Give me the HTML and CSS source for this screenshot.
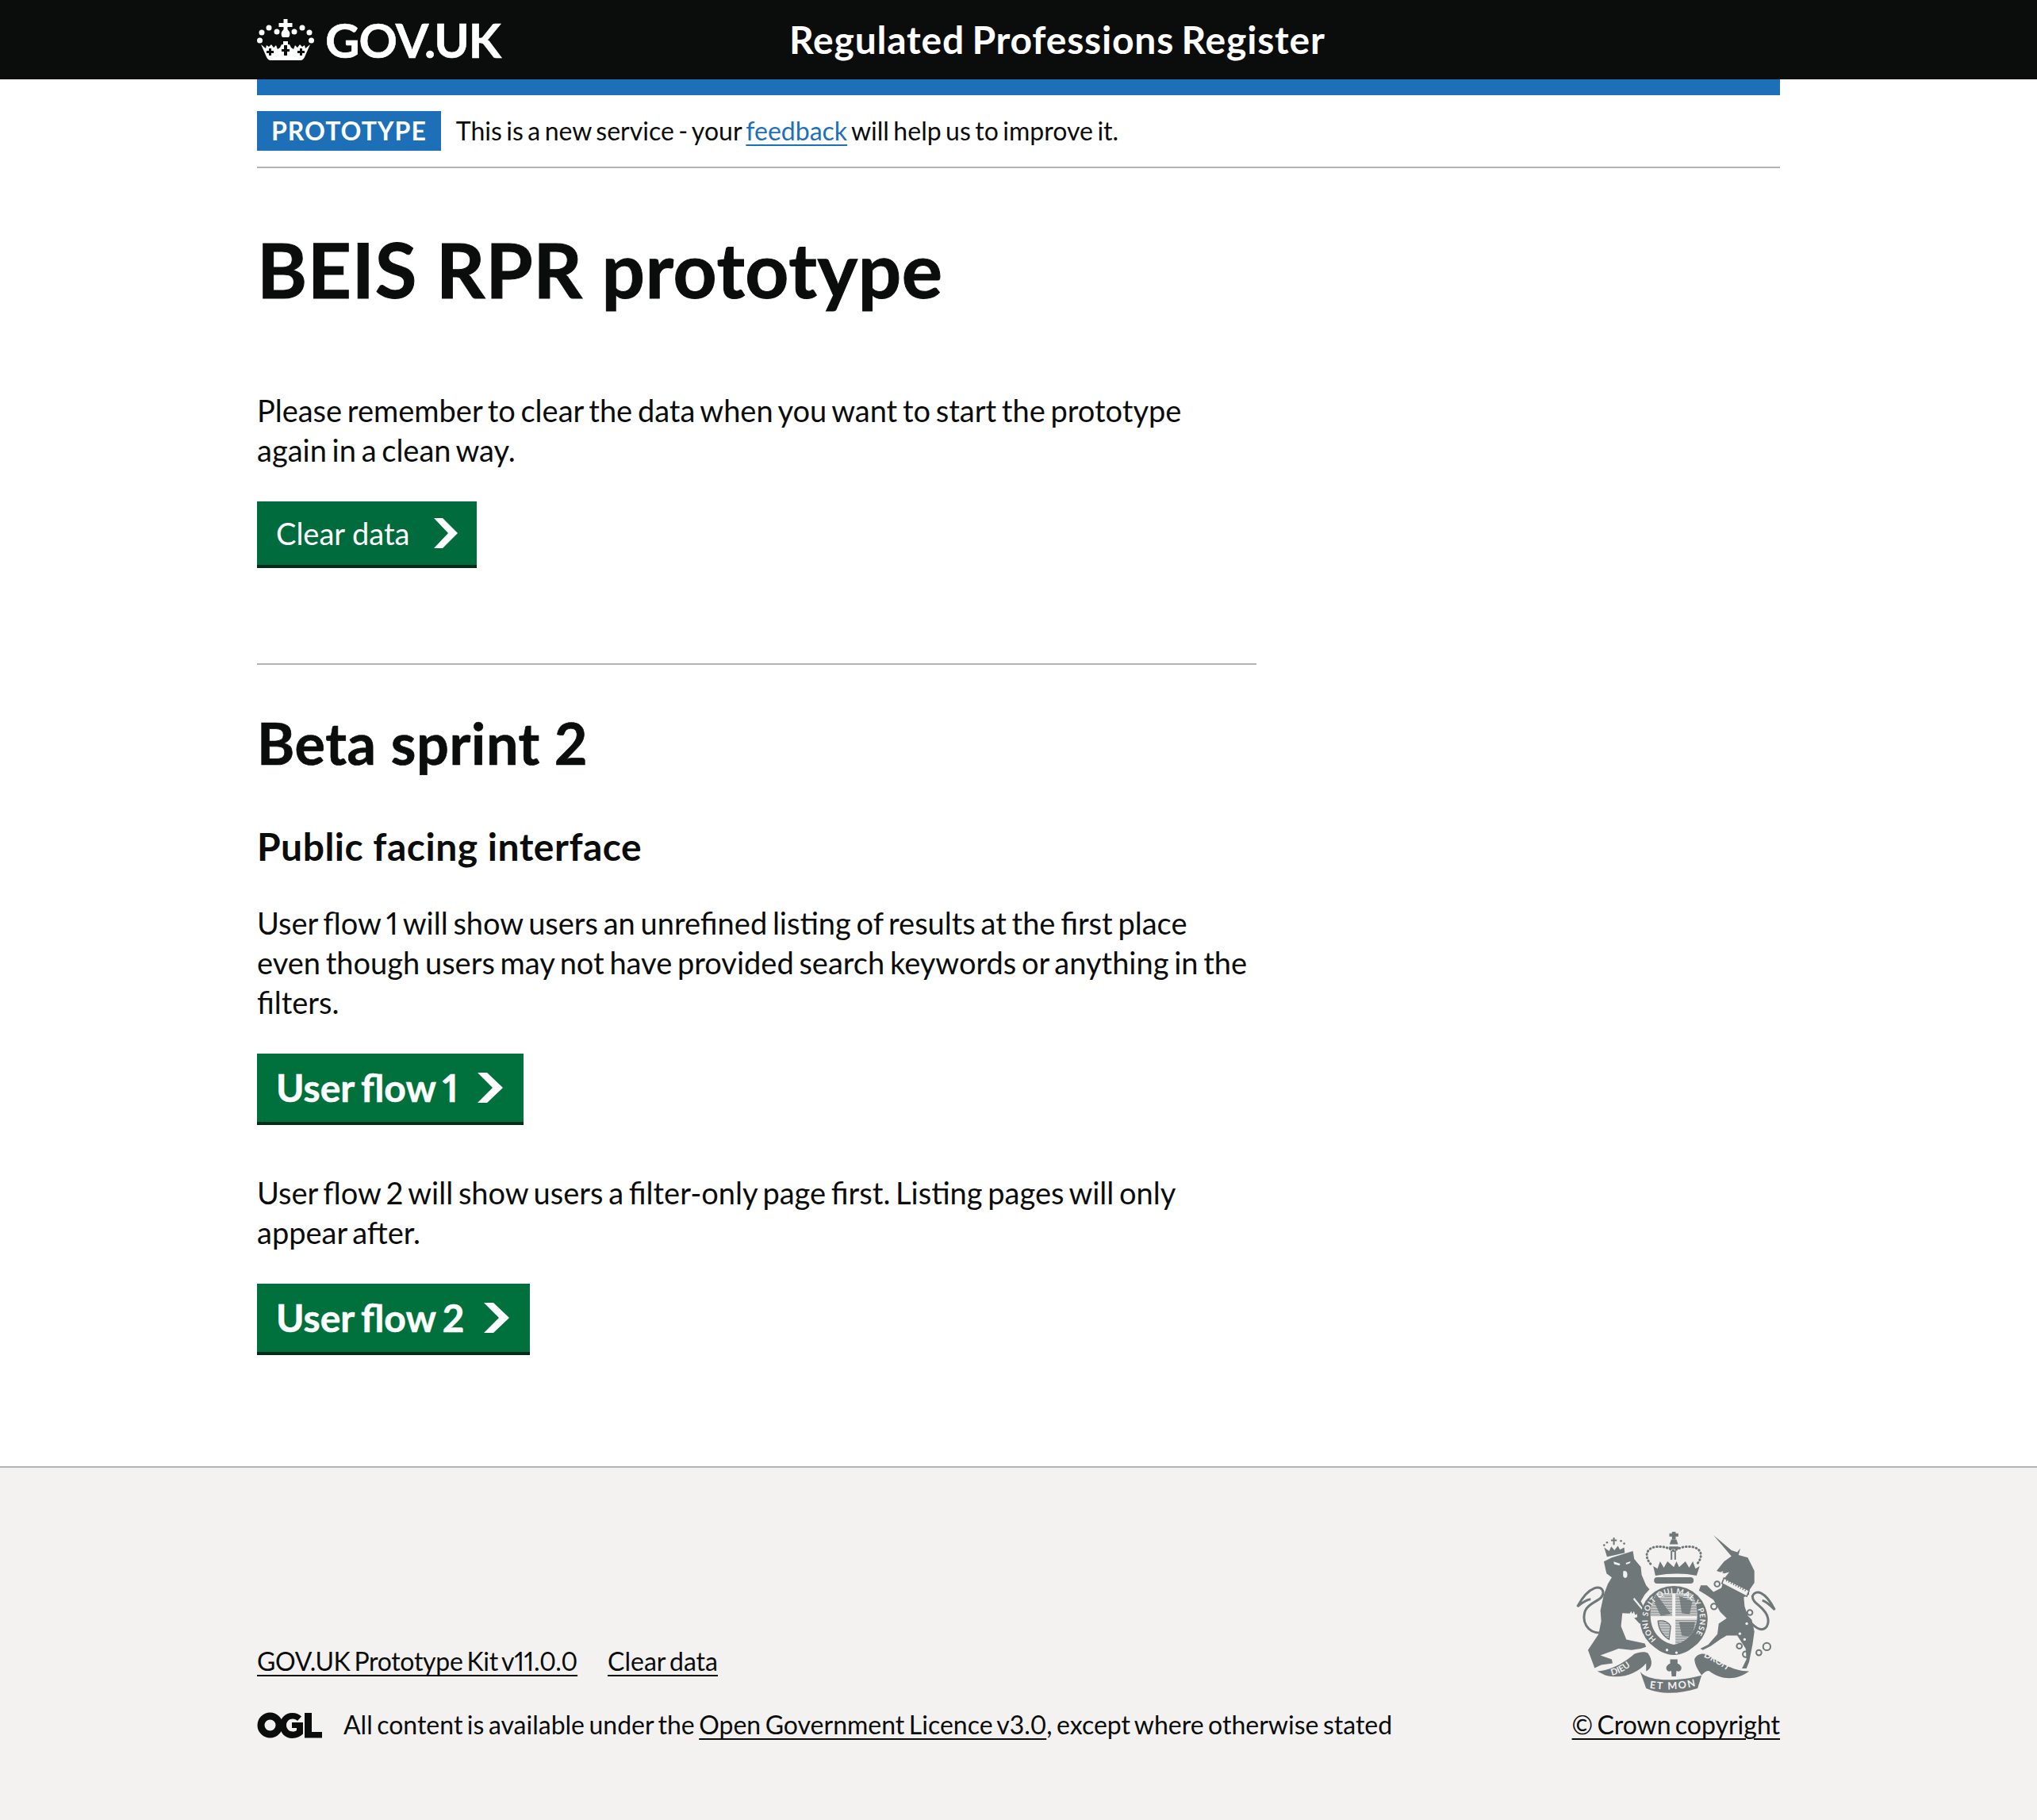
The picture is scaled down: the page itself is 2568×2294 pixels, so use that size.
FILE: index.html

```html
<!DOCTYPE html>
<html lang="en">
<head>
    <meta charset="UTF-8">
    <meta name="viewport" content="width=device-width, initial-scale=1.0">
    <title>BEIS RPR prototype</title>
    <link rel="stylesheet" href="styles.css">
</head>
<body>

    <!-- Header -->
    <header class="header">
        <div class="header-inner">
            <a class="logo" href="#">
                <svg class="crown" viewBox="0 0 72 52" aria-hidden="true">
                    <g fill="#fff">
                        <circle cx="3.500" cy="27" r="3.500"/><circle cx="68.500" cy="27" r="3.500"/>
                        <circle cx="6" cy="17" r="3.500"/><circle cx="66" cy="17" r="3.500"/>
                        <circle cx="15" cy="11" r="3.500"/><circle cx="57" cy="11" r="3.500"/>
                        <circle cx="25" cy="16" r="3.500"/><circle cx="47" cy="16" r="3.500"/>
                        <path d="M33.500 0h5v5h6v5h-6v3q5 5 1.500 10h-8q-3.500-5 1.500-10v-3h-6V5h6z"/>
                        <path d="M5 32l6 5 1-4 3 2 3-3 3 4 3-3 2 5 3-2 2-4h2v-4h6v4h2l2 4 3 2 2-5 3 3 3-4 3 3 3-2 1 4 6-5-7 16q-2 4-5 4H17q-3 0-5-4z"/>
                    </g>
                    <g fill="#0b0c0c">
                        <path d="M15 37h3v3h3v3h-3v3h-3v-3h-3v-3h3zM34 33h4v5h3v3h-3v5h-4v-5h-3v-3h3zM54 37h3v3h3v3h-3v3h-3v-3h-3v-3h3z"/>
                    </g>
                </svg>
                <span class="logo-text">GOV.UK</span>
            </a>
            <a class="service-name" href="#">Regulated Professions Register</a>
        </div>
    </header>

    <div class="container">
        <div class="blue-bar"></div>

        <div class="phase-banner">
            <strong class="phase-tag">PROTOTYPE</strong>
            <span>This is a new service - your <a href="#" class="link">feedback</a> will help us to improve it.</span>
        </div>

        <main class="main">
            <h1 class="title">BEIS RPR prototype</h1>

            <div class="two-thirds">
                <p class="intro">Please remember to clear the data when you want to start the prototype again in a clean way.</p>
                <a class="button button-small" href="#">Clear data
                    <svg class="chevron" viewBox="0 0 30 38"><path d="M0 0h11l19 19-19 19H0l18-19z"/></svg>
                </a>

                <hr class="divider">

                <h2 class="section-title">Beta sprint 2</h2>
                <h3 class="sub-title">Public facing interface</h3>

                <p class="flow-one">User flow 1 will show users an unrefined listing of results at the first place even though users may not have provided search keywords or anything in the filters.</p>
                <a class="button" href="#">User flow 1
                    <svg class="chevron" viewBox="0 0 32 38"><path d="M0 0h12l20 19-20 19H0l19-19z"/></svg>
                </a>

                <p class="flow-two">User flow 2 will show users a filter-only page first. Listing pages will only appear after.</p>
                <a class="button" href="#">User flow 2
                    <svg class="chevron" viewBox="0 0 32 38"><path d="M0 0h12l20 19-20 19H0l19-19z"/></svg>
                </a>
            </div>
        </main>
    </div>

    <!-- Footer -->
    <footer class="footer">
        <div class="footer-inner">
            <div class="footer-left">
                <div class="footer-links">
                    <a href="#" class="kit-link">GOV.UK Prototype Kit v11.0.0</a>
                    <a href="#">Clear data</a>
                </div>
                <div class="licence">
                    <svg class="ogl" viewBox="0 0 82 33" aria-hidden="true">
                        <circle cx="16.500" cy="16.500" r="11.500" fill="none" stroke="#0b0c0c" stroke-width="9"/>
                        <path d="M44.500 1c5 0 9 2 11.500 4.500L51 11c-1.500-1.500-3.500-2.500-6-2.500-4.500 0-8 3.500-8 8s3.500 8 8 8c2 0 3.500-.5 5-1.500v-3h-6v-7h14v14.500C54.500 30.500 50 33 44.500 33 35 33 29 26 29 17S35 1 44.500 1z" fill="#0b0c0c"/>
                        <path d="M60 1h9v24h13v7.500H60z" fill="#0b0c0c"/>
                    </svg>
                    <span>All content is available under the <a href="#">Open Government Licence v3.0</a>, except where otherwise stated</span>
                </div>
            </div>
            <div class="footer-right">
                <svg class="crest" viewBox="80 55 760 620" role="img" aria-label="Royal coat of arms">
                    <defs>
                        <path id="garterArc" d="M384 469A99 99 0 1 1 516 469"/>
                        <path id="dieuArc" d="M215 606Q270 596 325 532"/>
                        <path id="monArc" d="M358 654Q450 668 540 644"/>
                        <path id="droitArc" d="M562 536Q620 560 680 610"/>
                        <clipPath id="shieldClip">
                            <path d="M385 295H515C535 320 540 360 538 390C535 440 500 480 450 490C400 480 365 440 362 390C360 360 365 320 385 295Z"/>
                        </clipPath>
                        <pattern id="hatch" width="6" height="6" patternUnits="userSpaceOnUse">
                            <rect width="6" height="3" fill="#6f7779"/>
                        </pattern>
                    </defs>

                    <g fill="#6f7779">
                        <!-- lion -->
                        <path d="M185 175L215 160L295 135L300 165L325 195L328 225L345 265L358 280L340 300L325 325L335 345L362 385L350 402L320 410L285 372L255 370L250 420L270 470L340 485L345 498L325 505L290 510L240 505L200 520L172 530L215 545L218 560L175 566L150 578L125 510L165 450L175 400L172 360L185 300L200 260L215 235L195 220Z"/>
                        <path d="M172 445C120 445 100 400 115 360C130 325 185 325 182 290C178 262 130 262 85 345C105 330 120 318 135 318" fill="none" stroke="#6f7779" stroke-width="9"/>
                        <!-- lion crown -->
                        <path d="M197 157L186 122L205 135L213 118L225 132L238 116L246 130L262 122L264 142z"/>
                        <circle cx="186" cy="113" r="4"/><circle cx="197" cy="103" r="4"/><circle cx="250" cy="97" r="4"/><circle cx="262" cy="107" r="4"/>
                        <path d="M212 92h8v-8h6v8h8v6h-8v14h-6V98h-8z"/>

                        <!-- unicorn -->
                        <path d="M600 75L668 132L690 140L702 125L695 150L730 160L755 210L755 255L735 285L735 300L715 310L718 345L730 380L745 395L755 440L748 490L735 555L725 580L708 580L725 545L722 505L690 455L650 455L625 470L590 495L560 510L550 505L580 490L615 450L620 410L650 390L625 365L600 320L570 300L545 285L552 265L575 265L600 290L630 275L640 240L660 215L640 220L612 210L640 175L668 155Z"/>
                        <path d="M745 410C790 455 815 420 805 385C795 345 745 335 748 305C760 280 795 285 832 357C815 340 800 325 785 322" fill="none" stroke="#6f7779" stroke-width="9"/>
                    </g>
                    <g fill="none" stroke="#6f7779" stroke-width="6">
                        <circle cx="802" cy="497" r="14"/><circle cx="772" cy="520" r="10"/>
                        <circle cx="722" cy="526" r="11"/><circle cx="698" cy="495" r="10"/>
                        <circle cx="614" cy="260" r="10"/><circle cx="738" cy="368" r="10"/><circle cx="602" cy="345" r="11"/>
                    </g>
                    <path d="M640 237L735 285L726 307L632 258Z" fill="#f3f2f1" stroke="#6f7779" stroke-width="5"/>
                    <path d="M648 246L722 285" stroke="#6f7779" stroke-width="7" stroke-dasharray="4 6"/>
                    <g fill="#f3f2f1">
                        <path d="M222 175l25 8-3 7-20-5zM268 180l18-6-2 7-14 5z"/>
                        <path d="M258 212c12-6 18 5 15 20-5 8-12 6-15-2z"/>
                        <path d="M282 375l6-12 5 10 6-10 4 14 7-4 2 12-14 4z"/>
                        <path d="M300 312l50 62-4 4-50-60z"/>
                        <circle cx="700" cy="448" r="5"/><circle cx="718" cy="470" r="5"/><circle cx="726" cy="410" r="5"/>
                        <path d="M618 220l16-8 4 2-8 6z"/>
                    </g>

                    <!-- crown over the shield -->
                    <g fill="#6f7779">
                        <path d="M443 62h14v6h10v12h-10v12h-14V80h-10V68h10z"/>
                        <path d="M440 92h20l6 18h-32z"/>
                        <rect x="438" y="134" width="6" height="34"/><rect x="452" y="134" width="6" height="34"/>
                        <path d="M372 192l16 10 10-28 14 24 14-24 24 22 10-22 10 22 24-22 14 24 14-24 10 28 16-10-12 36q-70-14-156 0z"/>
                        <rect x="375" y="234" width="150" height="24" rx="12"/>
                        <rect x="432" y="118" width="36" height="10"/>
                    </g>
                    <path d="M362 184c-22-25-20-56 15-64 25-4 50 0 73 15 23-15 48-19 73-15 35 8 37 39 15 64" fill="none" stroke="#6f7779" stroke-width="9" stroke-dasharray="2 11" stroke-linecap="round"/>

                    <!-- garter and shield -->
                    <circle cx="450" cy="395" r="128" fill="#6f7779"/>
                    <path d="M385 295H515C535 320 540 360 538 390C535 440 500 480 450 490C400 480 365 440 362 390C360 360 365 320 385 295Z" fill="#f3f2f1"/>
                    <g clip-path="url(#shieldClip)">
                        <path d="M362 295h82v86h-82zM456 295h84v86h-84zM456 393h84v100h-84z" fill="url(#hatch)"/>
                        <path d="M385 300L440 375L400 380L372 320zM470 305l50 20-10 50-30-5zM470 405h60l-10 55-40-5z" fill="#6f7779" opacity="0.85"/>
                        <path d="M390 400c20-5 40 5 48 20l-6 50c-25-15-40-40-42-70z" fill="url(#hatch)" stroke="#6f7779" stroke-width="4"/>
                    </g>
                    <path d="M378 497c10 15 40 30 72 32 32-2 62-17 72-32l-20-8-52 20-52-20z" fill="#6f7779"/>
                    <circle cx="424" cy="510" r="5" fill="#f3f2f1"/><circle cx="460" cy="520" r="5" fill="#f3f2f1"/>

                    <text class="crest-text" font-size="29"><textPath href="#garterArc" textLength="450">HONI SOIT QUI MAL Y PENSE</textPath></text>

                    <!-- motto ribbons -->
                    <g fill="#6f7779">
                        <path d="M160 590C205 590 260 560 300 525C320 515 345 515 352 522C375 555 365 580 345 590L345 560C310 600 250 622 190 605Z"/>
                        <path d="M322 590C340 622 440 636 555 606L540 655C470 678 395 678 345 655Z"/>
                        <path d="M735 590C670 590 615 550 575 527C555 520 535 528 528 545C530 570 545 590 555 605C565 595 575 585 585 590C630 625 690 625 735 590Z"/>
                        <path d="M436 545h28v20h-28zM450 565c12-10 24 0 28 8 4 15-10 22-18 15l-2 22h-16l-2-22c-8 7-22 0-18-15 4-8 16-18 28-8z"/>
                    </g>
                    <g class="crest-text">
                        <text font-size="34"><textPath href="#dieuArc">DIEU</textPath></text>
                        <text font-size="38"><textPath href="#monArc" textLength="176">ET MON</textPath></text>
                        <text font-size="34"><textPath href="#droitArc">DROIT</textPath></text>
                    </g>
                </svg>
                <a class="copyright" href="#">© Crown copyright</a>
            </div>
        </div>
    </footer>

</body>
</html>
```

FILE: styles.css

```css
/* General Styles */
body {
    margin: 0;
    font-family: Lato, Arial, sans-serif;
    font-size: 38px;
    line-height: 50px;
    font-variant-numeric: proportional-nums;
    word-spacing: -3px;
    color: #0b0c0c;
    background-color: white;
}

a {
    color: inherit;
    text-decoration: underline;
    text-decoration-thickness: 2px;
    text-underline-offset: 5px;
}

/* Header */
.header {
    background-color: #0b0c0c;
    height: 100px;
}

.header-inner {
    width: 1920px;
    margin: 0 auto;
    display: flex;
    height: 100px;
    align-items: center;
}

.logo {
    width: 671px;
    display: flex;
    align-items: center;
    gap: 14px;
    color: white;
    text-decoration: none;
}

.crown {
    width: 72px;
    height: 52px;
    flex-shrink: 0;
}

.logo-text {
    font-size: 60px;
    font-weight: 700;
    line-height: 60px;
    letter-spacing: -1px;
    -webkit-text-stroke: 0.6px white;
}

.service-name {
    font-size: 48px;
    font-weight: 700;
    color: white;
    text-decoration: none;
    letter-spacing: 0.8px;
}

/* Layout */
.container {
    width: 1920px;
    margin: 0 auto;
}

.blue-bar {
    height: 20px;
    background-color: #1d70b8;
}

.phase-banner {
    display: flex;
    align-items: center;
    gap: 19px;
    padding: 20px 0;
    border-bottom: 2px solid #b1b4b6;
    font-size: 32px;
    line-height: 50px;
    word-spacing: -2.7px;
}

.phase-tag {
    background-color: #1d70b8;
    color: white;
    height: 50px;
    padding: 0 18px;
    font-size: 32px;
    letter-spacing: 1px;
}

.link {
    color: #1d70b8;
}

.main {
    padding-top: 77px;
    padding-bottom: 140px;
}

.title {
    font-size: 96px;
    line-height: 100px;
    font-weight: 700;
    letter-spacing: 0.6px;
    word-spacing: 0;
    -webkit-text-stroke: 1px #0b0c0c;
    margin: 0 0 103px;
}

.two-thirds {
    width: 1260px;
}

.intro,
.flow-one,
.flow-two {
    margin: 0 0 40px;
    max-width: 1250px;
}

.flow-one {
    margin-top: 46px;
}

.flow-two {
    margin-top: 60px;
}

/* Buttons */
.button {
    display: inline-flex;
    align-items: center;
    gap: 25px;
    height: 86px;
    padding: 0 26px 0 24px;
    background-color: #00703c;
    border-bottom: 4px solid #002d18;
    color: white;
    text-decoration: none;
    font-size: 48px;
    font-weight: 700;
    -webkit-text-stroke: 0.5px white;
    vertical-align: top;
}

.button-small {
    height: 80px;
    padding-right: 24px;
    font-size: 38px;
    font-weight: 400;
    word-spacing: 0;
    gap: 30px;
    background-color: #006b3c;
    -webkit-text-stroke: 0;
}

.chevron {
    width: 32px;
    height: 38px;
    fill: white;
}

.button-small .chevron {
    width: 30px;
}

.divider {
    border: 0;
    border-top: 2px solid #b1b4b6;
    margin: 120px 0 58px;
}

.section-title {
    font-size: 72px;
    line-height: 80px;
    font-weight: 700;
    letter-spacing: 0.6px;
    word-spacing: 0;
    -webkit-text-stroke: 0.7px #0b0c0c;
    margin: 0 0 66px;
}

.sub-title {
    font-size: 48px;
    line-height: 50px;
    font-weight: 700;
    letter-spacing: 0.5px;
    word-spacing: 0;
    margin: 0;
}

/* Footer */
.footer {
    background-color: #f3f2f1;
    border-top: 2px solid #b1b4b6;
    height: 444px;
    font-size: 32px;
    line-height: 40px;
}

.footer-inner {
    width: 1920px;
    margin: 0 auto;
    display: flex;
    justify-content: space-between;
    align-items: flex-end;
    height: 344px;
}

.footer-links {
    display: flex;
    gap: 38px;
    margin-bottom: 40px;
}

.kit-link {
    letter-spacing: -0.3px;
}

.licence {
    display: flex;
    align-items: center;
    gap: 27px;
    word-spacing: -2.7px;
}

.ogl {
    width: 82px;
    height: 33px;
}

.footer-right {
    display: flex;
    flex-direction: column;
    align-items: flex-end;
}

.crest {
    width: 253px;
    height: 207px;
    margin-bottom: 19px;
    margin-right: 4px;
}

.crest-text {
    fill: #f3f2f1;
    font-family: Lato, Arial, sans-serif;
    font-weight: 700;
    word-spacing: 0;
}

.copyright {
    display: block;
    font-size: 32px;
}
```
